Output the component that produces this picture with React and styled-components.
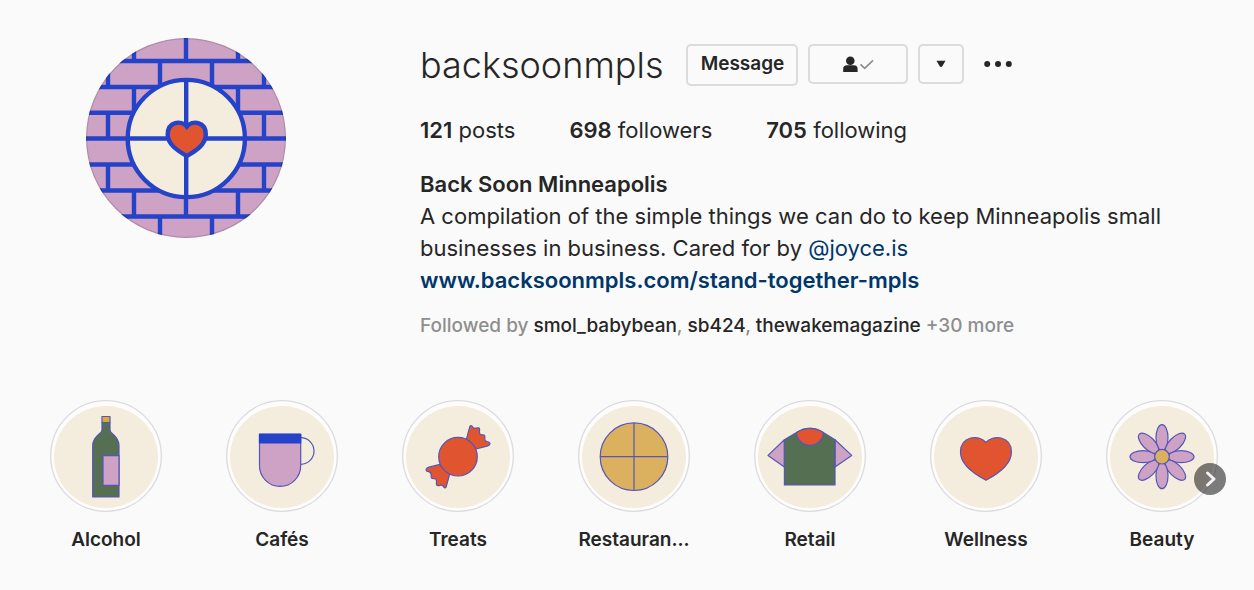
import React from "react";
import styled, { createGlobalStyle } from "styled-components";

const INK = "#262626";
const MUTED = "#8e8e8e";
const LINK = "#00376b";
const BLUE = "#2443c8";
const OUTLINE = "#5456b8";
const PINK = "#cda2c4";
const CREAM = "#f4ecdc";
const RED = "#e0552f";
const GREEN = "#556f52";
const GOLD = "#dbb15f";

const GlobalStyle = createGlobalStyle`
  *, *::before, *::after { box-sizing: border-box; }
  body {
    margin: 0;
    background: #fafafa;
    color: ${INK};
    font-family: Inter, "Liberation Sans", sans-serif;
    font-size: 22px;
    line-height: 32px;
  }
`;

const Page = styled.main`
  padding: 38px 0;
`;

const ProfileHeader = styled.header`
  display: flex;
  align-items: flex-start;
  gap: 134px;
  padding: 0 86px;
`;

const AvatarImage = styled.svg`
  flex: none;
  width: 200px;
  height: 200px;
`;

const Details = styled.section`
  flex: 1;
  min-width: 0;
  padding-top: 6px;
`;

const TitleRow = styled.div`
  display: flex;
  align-items: flex-start;
  gap: 10px;
`;

const Username = styled.h1`
  margin: 0 13px 0 0;
  font-size: 36px;
  font-weight: 300;
  line-height: 42px;
`;

const OutlineButton = styled.button`
  display: flex;
  align-items: center;
  justify-content: center;
  height: ${(p) => p.$height}px;
  min-width: ${(p) => p.$width}px;
  padding: 0 0 2px;
  border: 2px solid #dbdbdb;
  border-radius: 5px;
  background: transparent;
  color: ${INK};
  font: 600 19px/24px Inter, "Liberation Sans", sans-serif;
  cursor: pointer;
`;

const MoreButton = styled.button`
  display: flex;
  align-items: center;
  height: 40px;
  padding: 0 10px;
  border: 0;
  background: transparent;
  cursor: pointer;
`;

const Stats = styled.ul`
  display: flex;
  gap: 54px;
  margin: 28px 0 22px;
  padding: 0;
  list-style: none;
`;

const Strong = styled.strong`
  font-weight: 600;
`;

const DisplayName = styled.h2`
  margin: 0;
  font-size: 22px;
  font-weight: 600;
  line-height: 32px;
`;

const Bio = styled.p`
  margin: 0;
  max-width: 748px;
`;

const BioLink = styled.a`
  color: ${LINK};
  text-decoration: none;
  font-weight: ${(p) => (p.$bold ? 600 : 400)};
`;

const FollowedBy = styled.p`
  margin: 18px 0 0;
  color: ${MUTED};
  font-size: 19px;
  font-weight: 500;
  line-height: 24px;
`;

const Follower = styled.a`
  color: ${INK};
  text-decoration: none;
`;

const HighlightsBar = styled.section`
  position: relative;
  margin-top: 62px;
`;

const HighlightList = styled.ul`
  display: flex;
  justify-content: space-between;
  margin: 0;
  padding: 0 36px 0 50px;
  list-style: none;
`;

const HighlightButton = styled.button`
  display: flex;
  flex-direction: column;
  align-items: center;
  gap: 16px;
  width: 112px;
  padding: 0;
  border: 0;
  background: transparent;
  color: ${INK};
  font: 600 19px/24px Inter, "Liberation Sans", sans-serif;
  white-space: nowrap;
  cursor: pointer;
`;

const HighlightImage = styled.svg`
  display: block;
  width: 112px;
  height: 112px;
`;

const NextButton = styled.button`
  position: absolute;
  top: 63px;
  right: 28px;
  display: flex;
  width: 32px;
  height: 32px;
  padding: 0;
  border: 0;
  border-radius: 50%;
  background: rgba(38, 38, 38, 0.6);
  cursor: pointer;
`;

const Avatar = () => (
  <AvatarImage viewBox="0 0 200 200" role="img" aria-label="backsoonmpls profile picture">
    <defs>
      <clipPath id="avatar-clip">
        <circle cx="100" cy="100" r="100" />
      </clipPath>
    </defs>
    <g clipPath="url(#avatar-clip)" fill="none" stroke={BLUE} strokeWidth="4.4">
      <rect width="200" height="200" fill={PINK} stroke="none" />
      <path d="M0 23H200M0 49H200M0 74.8H200M0 100.5H200M0 126.5H200M0 152.5H200M0 178.5H200" />
      <path d="M48 0V23M100 0V23M152 0V23M22 23V49M74 23V49M126 23V49M178 23V49M48 49V75M152 49V75M22 75V100M178 75V100M22 126V152M178 126V152M48 152V178M100 152V178M152 152V178M74 178V200M126 178V200" />
      <circle cx="100.3" cy="100.5" r="58.6" fill={CREAM} />
      <path d="M100.2 42V159M42 100.5H159" />
      <path
        d="M100.8 88.6C95.5 82 81.7 83 81.7 96.5C81.7 107.5 94 114 100.8 118C107.6 114 119.8 107.5 119.8 96.5C119.8 83 106 82 100.8 88.6Z"
        fill={RED}
      />
      <circle cx="100" cy="100" r="99.5" stroke="#000" strokeOpacity="0.14" strokeWidth="1.4" />
    </g>
  </AvatarImage>
);

const Bottle = () => (
  <>
    <path
      d="M52 22.5V30C52 34.5 42.7 35 42.7 46V97H69V46C69 35 60 34.5 60 30V22.5Z"
      fill={GREEN}
    />
    <path d="M52 16.5H60V22.5H52Z" fill="#dfa63c" />
    <path d="M53 55.6H69V85.3H53Z" fill={PINK} />
  </>
);

const Cup = () => (
  <>
    <path d="M74.7 37.7A13.3 13.3 0 0 1 74.7 64.3" fill="none" />
    <path d="M33.5 34V65.8A20.6 20.6 0 0 0 74.7 65.8V34Z" fill={PINK} />
    <path d="M33.5 34.3H74.7V43H33.5Z" fill={BLUE} stroke={BLUE} />
  </>
);

const WRAPPER_END =
  "M64.3 39.6L67.8 26.6Q68.6 24.8 70 26.1Q71.4 29 74 28.1Q77.8 27 77.6 29.6Q76.9 34.6 79.5 34.9Q83.2 34.3 82.8 36.8Q82.2 40.4 84.6 41.5Q88.4 42 87.9 44Q87.4 45.6 85 46.2L74 49Q70 42.7 64.3 39.6Z";

const Candy = () => (
  <g fill={RED}>
    <path d={WRAPPER_END} />
    <path d={WRAPPER_END} transform="rotate(180 56 56.7)" />
    <circle cx="56" cy="56.7" r="19.3" />
  </g>
);

const Plate = () => (
  <>
    <circle cx="56" cy="56.7" r="33.8" fill={GOLD} />
    <path d="M56 23V90.4M22.2 56.7H89.8" />
  </>
);

const Shirt = () => (
  <>
    <path d="M30.4 39.8L14 55.4L30.4 67ZM81 39.8L97.7 55.4L81 67Z" fill={PINK} />
    <path
      d="M30.4 39.8L42.5 32.6Q49 28.4 56 28.4Q63 28.4 69.3 32.6L81 39.8V85H30.4Z"
      fill={GREEN}
    />
    <path d="M42.5 32.6Q49 28.4 56 28.4Q63 28.4 69.3 32.6C69.3 40 63 45.4 56 45.4C49 45.4 42.5 40 42.5 32.6Z" fill={RED} />
  </>
);

const Heart = () => (
  <path
    d="M56 42.3C49.5 34.5 30.5 35.5 30.5 52C30.5 65.5 45 74.5 56 80.2C67 74.5 81.4 65.5 81.4 52C81.4 35.5 62.5 34.5 56 42.3Z"
    fill={RED}
  />
);

const Flower = () => (
  <g transform="translate(56 56.7)">
    {[0, 45, 90, 135, 180, 225, 270, 315].map((angle) => (
      <ellipse
        key={angle}
        cy="-19"
        rx="6"
        ry="13"
        fill={PINK}
        transform={`rotate(${angle})`}
      />
    ))}
    <circle r="7.3" fill={GOLD} />
  </g>
);

const highlights = [
  { label: "Alcohol", Drawing: Bottle },
  { label: "Cafés", Drawing: Cup },
  { label: "Treats", Drawing: Candy },
  { label: "Restauran...", Drawing: Plate },
  { label: "Retail", Drawing: Shirt },
  { label: "Wellness", Drawing: Heart },
  { label: "Beauty", Drawing: Flower },
];

const Highlight = ({ label, Drawing }) => (
  <li>
    <HighlightButton type="button">
      <HighlightImage viewBox="0 0 112 112" aria-hidden="true">
        <circle cx="56" cy="56" r="55.3" fill="#fdfdfd" stroke="#dbdbdf" strokeWidth="1.3" />
        <ellipse cx="56" cy="57" rx="52" ry="51" fill={CREAM} />
        <g stroke={OUTLINE} strokeWidth="1.2" strokeLinejoin="round">
          <Drawing />
        </g>
      </HighlightImage>
      {label}
    </HighlightButton>
  </li>
);

export default function App() {
  return (
    <>
      <GlobalStyle />
      <Page>
        <ProfileHeader>
          <Avatar />
          <Details>
            <TitleRow>
              <Username>backsoonmpls</Username>
              <OutlineButton type="button" $width={112} $height={42}>
                Message
              </OutlineButton>
              <OutlineButton type="button" $width={100} $height={40} aria-label="Following">
                <svg width="32" height="18" viewBox="0 0 32 18" aria-hidden="true">
                  <circle cx="8.3" cy="6.7" r="4.3" fill={INK} />
                  <path d="M1.2 18V15Q1.2 11.3 5 11.3H11.8Q15.6 11.3 15.6 15V18Z" fill={INK} />
                  <path d="M18.5 10.3L22.7 14.3L31 6.3" fill="none" stroke={MUTED} strokeWidth="1.7" />
                </svg>
              </OutlineButton>
              <OutlineButton type="button" $width={46} $height={40} aria-label="Suggested accounts">
                <svg width="10" height="8" viewBox="0 0 10 8" aria-hidden="true">
                  <path d="M0.5 1.8H9.5L6.3 7.2Q5 8.6 3.7 7.2Z" fill={INK} />
                </svg>
              </OutlineButton>
              <MoreButton type="button" aria-label="More options">
                <svg width="28" height="8" viewBox="0 0 28 8" fill={INK} aria-hidden="true">
                  <circle cx="3.2" cy="4" r="3" />
                  <circle cx="14" cy="4" r="3" />
                  <circle cx="24.8" cy="4" r="3" />
                </svg>
              </MoreButton>
            </TitleRow>
            <Stats>
              <li><Strong>121</Strong> posts</li>
              <li><Strong>698</Strong> followers</li>
              <li><Strong>705</Strong> following</li>
            </Stats>
            <DisplayName>Back Soon Minneapolis</DisplayName>
            <Bio>
              A compilation of the simple things we can do to keep Minneapolis small businesses in
              business. Cared for by <BioLink href="#joyce">@joyce.is</BioLink>
            </Bio>
            <BioLink $bold href="#stand-together">www.backsoonmpls.com/stand-together-mpls</BioLink>
            <FollowedBy>
              Followed by <Follower href="#smol">smol_babybean</Follower>,{" "}
              <Follower href="#sb424">sb424</Follower>,{" "}
              <Follower href="#wake">thewakemagazine</Follower> +30 more
            </FollowedBy>
          </Details>
        </ProfileHeader>
        <HighlightsBar aria-label="Story highlights">
          <HighlightList>
            {highlights.map((item) => (
              <Highlight key={item.label} {...item} />
            ))}
          </HighlightList>
          <NextButton type="button" aria-label="Next">
            <svg width="32" height="32" viewBox="0 0 32 32" aria-hidden="true">
              <path d="M13.5 10L20 16L13.5 22" fill="none" stroke="#f3f2ef" strokeWidth="3" strokeLinecap="round" strokeLinejoin="round" />
            </svg>
          </NextButton>
        </HighlightsBar>
      </Page>
    </>
  );
}
